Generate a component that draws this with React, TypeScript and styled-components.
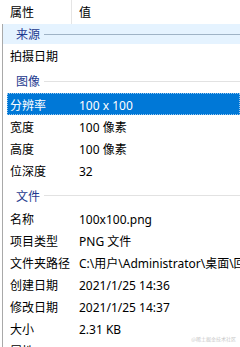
import React from "react";
import styled, { createGlobalStyle } from "styled-components";

const Global = createGlobalStyle`
  html, body { margin: 0; padding: 0; background: #ffffff; }
  body { font-family: "Noto Sans", "Noto Sans CJK SC", sans-serif; font-size: 12px; color: #000; }
`;

const Panel = styled.div`
  position: relative;
  width: 240px;
  height: 347px;
  overflow: hidden;
  background: #ffffff;
`;

const Header = styled.div`
  display: grid;
  grid-template-columns: 71px 1fr;
  height: 24px;
  align-items: center;
`;

const HeaderCell = styled.div<{ $sep?: boolean }>`
  height: 100%;
  display: flex;
  align-items: center;
  padding-left: ${(p) => (p.$sep ? "7px" : "10px")};
  border-left: ${(p) => (p.$sep ? "1px solid #e5e5e5" : "none")};
`;

const List = styled.div`
  display: flex;
  flex-direction: column;
  border-left: 1px solid #a9a9a9;
  margin-left: 2px;
`;

const Group = styled.div<{ $h: number; $hover?: boolean }>`
  display: flex;
  align-items: center;
  gap: 4px;
  height: ${(p) => p.$h}px;
  padding: ${(p) => (p.$hover ? "0" : "3px")} 0 0 13px;
  box-sizing: border-box;
  background: ${(p) => (p.$hover ? "#e5f3ff" : "transparent")};
  color: #1e3a8f;
`;

const GroupLine = styled.div<{ $hover?: boolean }>`
  flex: 1;
  height: 1px;
  background: ${(p) => (p.$hover ? "#9fb3c6" : "#e2e2e2")};
`;

const Row = styled.div<{ $selected?: boolean }>`
  display: grid;
  grid-template-columns: ${(p) => (p.$selected ? "64px" : "68px")} 1fr;
  height: 22px;
  align-items: center;
  padding-top: 2px;
  box-sizing: border-box;
  white-space: nowrap;
  background: ${(p) => (p.$selected ? "#0078d7" : "transparent")};
  color: ${(p) => (p.$selected ? "#ffffff" : "#000000")};
  outline: ${(p) => (p.$selected ? "1px dotted #9cc8ee" : "none")};
  outline-offset: -1px;
  margin-left: ${(p) => (p.$selected ? "4px" : "0")};
`;

const Name = styled.span<{ $selected?: boolean }>`
  padding-left: ${(p) => (p.$selected ? "3px" : "7px")};
  overflow: hidden;
`;

const Value = styled.span`
  padding-left: 8px;
  overflow: hidden;
`;

const Watermark = styled.div`
  position: absolute;
  right: 4px;
  bottom: 5px;
  font-size: 5px;
  color: #c8c8c8;
  font-family: "Noto Sans CJK SC", sans-serif;
`;

type Item =
  | { kind: "group"; label: string; h: number; hover?: boolean }
  | { kind: "row"; name: string; value: string; selected?: boolean };

const items: Item[] = [
  { kind: "group", label: "来源", h: 20, hover: true },
  { kind: "row", name: "拍摄日期", value: "" },
  { kind: "group", label: "图像", h: 27 },
  { kind: "row", name: "分辨率", value: "100 x 100", selected: true },
  { kind: "row", name: "宽度", value: "100 像素" },
  { kind: "row", name: "高度", value: "100 像素" },
  { kind: "row", name: "位深度", value: "32" },
  { kind: "group", label: "文件", h: 26 },
  { kind: "row", name: "名称", value: "100x100.png" },
  { kind: "row", name: "项目类型", value: "PNG 文件" },
  { kind: "row", name: "文件夹路径", value: "C:\\用户\\Administrator\\桌面\\回收站" },
  { kind: "row", name: "创建日期", value: "2021/1/25 14:36" },
  { kind: "row", name: "修改日期", value: "2021/1/25 14:37" },
  { kind: "row", name: "大小", value: "2.31 KB" },
  { kind: "row", name: "属性", value: "A" },
];

export default function App() {
  return (
    <>
      <Global />
      <Panel>
        <Header>
          <HeaderCell>属性</HeaderCell>
          <HeaderCell $sep>值</HeaderCell>
        </Header>
        <List>
          {items.map((it, i) =>
            it.kind === "group" ? (
              <Group key={i} $h={it.h} $hover={it.hover}>
                {it.label}
                <GroupLine $hover={it.hover} />
              </Group>
            ) : (
              <Row key={i} $selected={it.selected}>
                <Name $selected={it.selected}>{it.name}</Name>
                <Value>{it.value}</Value>
              </Row>
            )
          )}
        </List>
        <Watermark>@稀土掘金技术社区</Watermark>
      </Panel>
    </>
  );
}
